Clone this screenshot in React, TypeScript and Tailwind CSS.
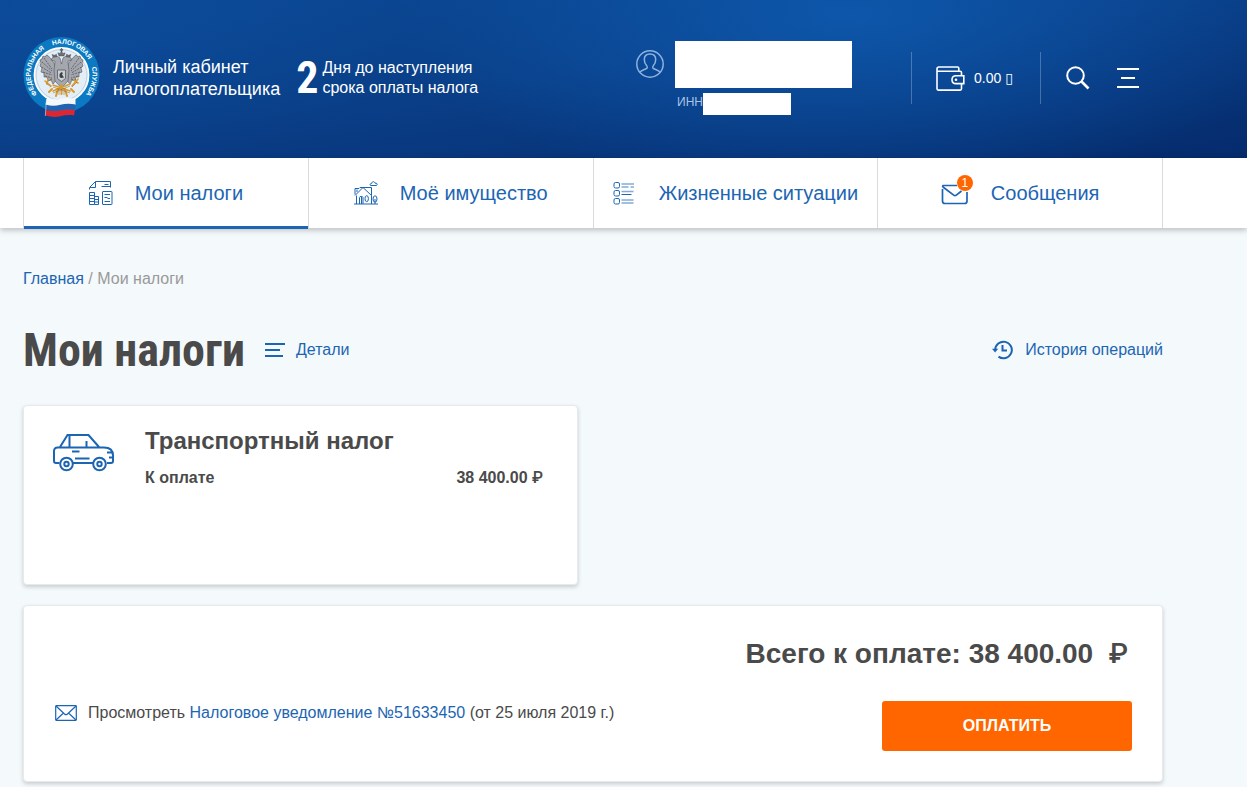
import type { ReactNode } from "react";

const navItems = [
  { title: "Мои налоги", icon: <TaxIcon />, active: true, badge: 0 },
  { title: "Моё имущество", icon: <HouseIcon />, active: false, badge: 0 },
  { title: "Жизненные ситуации", icon: <ListIcon />, active: false, badge: 0 },
  { title: "Сообщения", icon: <MessageIcon />, active: false, badge: 1 },
];

export default function App() {
  return (
    <div className="min-h-screen bg-[#f4f9fc] pb-1 font-['Liberation_Sans',Arial,sans-serif] text-base text-[#4a4a4a]">
      <Header />

      {/* navigation */}
      <nav className="bg-white pl-[23px] pr-[84px] shadow-[0_2px_6px_rgba(0,0,0,0.25)]">
        <div className="grid grid-cols-4 border-r border-[#d8dadc]">
          {navItems.map((item) => (
            <NavItem key={item.title} title={item.title} active={item.active} badge={item.badge}>
              {item.icon}
            </NavItem>
          ))}
        </div>
      </nav>

      <main className="pl-[23px] pr-[84px]">
        {/* breadcrumbs */}
        <div className="pt-[39px] leading-6 text-[#999]">
          <a href="#" className="text-[#1c65b3]">
            Главная
          </a>{" "}
          / Мои налоги
        </div>

        {/* title */}
        <div className="mt-[27px] flex h-16 items-center">
          <h1 className="font-['Roboto_Condensed',Roboto,sans-serif] text-[46px] leading-[64px] font-bold">
            Мои налоги
          </h1>
          <button type="button" className="ml-5 flex items-center gap-[11px] text-[#1c65b3]">
            <svg width="20" height="14" viewBox="0 0 20 14" fill="none" stroke="currentColor" strokeWidth="2">
              <path d="M0 1h20M0 7h15M0 13h18" />
            </svg>
            Детали
          </button>
          <a href="#" className="ml-auto flex items-center gap-3 text-[#1c65b3]">
            <HistoryIcon />
            История операций
          </a>
        </div>

        {/* taxes */}
        <div className="mt-[23px] grid grid-cols-2 gap-[30px]">
          <section className="flex h-[180px] gap-[30px] rounded-sm border border-[#e6eaed] bg-white pt-[21px] pr-[34px] pl-[29px] shadow-[0_2px_4px_rgba(0,0,0,0.18)]">
            <CarIcon />
            <div className="flex-1">
              <h2 className="text-2xl leading-7 font-bold">Транспортный налог</h2>
              <div className="mt-[11px] flex justify-between leading-6 font-bold">
                <span>К оплате</span>
                <span>
                  38 400.00 <Rouble />
                </span>
              </div>
            </div>
          </section>
        </div>

        {/* total */}
        <section className="mt-5 rounded-sm border border-[#e6eaed] bg-white px-[30px] pt-[30px] pb-[30px] shadow-[0_2px_4px_rgba(0,0,0,0.18)]">
          <div className="pr-1 text-right text-[28px] leading-9 font-bold">
            Всего к оплате: 38 400.00&nbsp; <Rouble />
          </div>
          <div className="mt-[29px] flex items-start justify-between">
            <div className="flex items-center gap-[11px] leading-6">
              <EnvelopeIcon />
              <p>
                Просмотреть{" "}
                <a href="#" className="text-[#1c65b3]">
                  Налоговое уведомление №51633450
                </a>{" "}
                (от 25 июля 2019 г.)
              </p>
            </div>
            <button type="button" className="h-[50px] w-[250px] rounded-[3px] bg-[#ff6600] font-bold text-white">
              ОПЛАТИТЬ
            </button>
          </div>
        </section>
      </main>
    </div>
  );
}

function Rouble() {
  return <span className="font-['Roboto',sans-serif] leading-none font-medium">₽</span>;
}

function Header() {
  return (
    <header className="flex h-[158px] items-center justify-between bg-[radial-gradient(ellipse_460px_180px_at_850px_15px,rgba(14,92,178,0.8),transparent),radial-gradient(ellipse_420px_150px_at_60px_0px,rgba(14,82,165,0.5),transparent),linear-gradient(172deg,#0a4590_10%,#0a3f88_45%,#052b6c_100%)] pr-[108px] pb-0.5 pl-[23px] text-white">
      <div className="flex items-center">
        <Emblem />
        <div className="ml-3 text-lg leading-[22px]">
          Личный кабинет
          <br />
          налогоплательщика
        </div>
        <span className="ml-4 font-['Roboto_Condensed',Roboto,sans-serif] text-[44px] leading-[44px] font-bold">
          2
        </span>
        <div className="ml-1 leading-5">
          Дня до наступления
          <br />
          срока оплаты налога
        </div>
      </div>

      <div className="flex items-center">
        {/* taxpayer */}
        <div className="flex gap-[11px]">
          <UserIcon />
          <div>
            <div className="h-[47px] w-[177px] bg-white" />
            <div className="mt-[5px] flex h-[22px] pl-0.5">
              <span className="w-[26px] text-xs leading-[18px] text-[#a9c3e6]">ИНН</span>
              <div className="w-[88px] bg-white" />
            </div>
          </div>
        </div>

        <a
          href="#"
          className="ml-[59px] flex h-[52px] w-[130px] items-center gap-[9px] border-x border-white/25 pl-6 text-sm"
        >
          <WalletIcon />
          <span>
            0.00 <span className="font-['DejaVu_Sans',sans-serif]">▯</span>
          </span>
        </a>
        <button type="button" aria-label="Поиск" className="ml-[25px]">
          <svg width="24" height="24" viewBox="0 0 24 24" fill="none" stroke="currentColor" strokeWidth="2">
            <circle cx="9.5" cy="9.5" r="8.3" />
            <path d="M15.5 15.5l7 7" strokeWidth="2.6" />
          </svg>
        </button>
        <button type="button" aria-label="Меню" className="ml-[27px]">
          <svg width="22" height="20" viewBox="0 0 22 20" fill="none" stroke="currentColor" strokeWidth="2">
            <path d="M0 1h22M4 10h14M0 19h22" />
          </svg>
        </button>
      </div>
    </header>
  );
}

interface NavItemProps {
  title: string;
  active: boolean;
  badge: number;
  children: ReactNode;
}

function NavItem({ title, active, badge, children }: NavItemProps) {
  return (
    <a
      href="#"
      className="relative flex h-[70px] items-center justify-center gap-[22px] border-l border-[#d8dadc] text-xl text-[#1c65b3]"
    >
      <span className="relative">
        {children}
        {badge > 0 && (
          <span className="absolute -top-1.5 -right-1 flex size-4 items-center justify-center rounded-full bg-[#ff6600] text-xs leading-4 text-white">
            {badge}
          </span>
        )}
      </span>
      {title}
      {active && <span className="absolute inset-x-0 -bottom-px h-[3px] bg-[#1c65b3]" />}
    </a>
  );
}

function Emblem() {
  return (
    <svg width="78" height="82" viewBox="0 0 78 82" className="shrink-0">
      <defs>
        <path id="ring" d="M14.8 57.9A31 31 0 1 1 62.2 57.9" />
      </defs>
      <circle cx="38.5" cy="38" r="38" fill="#0b7ac2" />
      <circle cx="38.5" cy="38" r="27.2" fill="#e4eef7" stroke="#fff" strokeWidth="1.4" />
      <circle cx="38.5" cy="38" r="25.4" fill="none" stroke="#9fb6cb" strokeWidth="0.5" />
      <text fill="#fff" fontSize="6.6" fontWeight="700">
        <textPath href="#ring" startOffset="1">
          ФЕДЕРАЛЬНАЯ
        </textPath>
        <textPath href="#ring" startOffset="61">
          НАЛОГОВАЯ
        </textPath>
        <textPath href="#ring" startOffset="111">
          СЛУЖБА
        </textPath>
      </text>
      {/* wings */}
      <g fill="#a4a8ae" stroke="#4f5359" strokeWidth="0.6">
        <path d="M33 30c-2-5-5-9-9-12l-2 2-2-1-1 3-2 1 1 3-1 3 2 2-1 4 3 1 0 4 3 0 1 4 3-1 2 4 4-5z" />
        <path d="M44 30c2-5 5-9 9-12l2 2 2-1 1 3 2 1-1 3 1 3-2 2 1 4-3 1 0 4-3 0-1 4-3-1-2 4-4-5z" />
        <path d="M32 24l-4-1 2-3 4-1 3 2 1.500 6 1.500-6 3-2 4 1 2 3-4 1 1 10-1 10-6.500 7-6.500-7-1-10z" />
      </g>
      <g fill="none" stroke="#5b5f65" strokeWidth="0.9">
        <path
          d="M21 21l8 11M19 25l10 9M18.500 30l10 6M20 35l9 3M22 39l7 2M24 43l6-1M56 21l-8 11M58 25l-10 9M58.500 30l-10 6M57 35l-9 3M55 39l-7 2M53 43l-6-1"
          strokeDasharray="2 1"
        />
      </g>
      {/* crowns */}
      <g fill="#6d7176" stroke="#3d4045" strokeWidth="0.4">
        <path d="M36 19l-1.200-3.200 2.200 0.600 1.500-2.200 1.500 2.200 2.200-0.600L41 19z" />
        <path d="M38 11.500h1v1h1v0.800h-1v1.500h-1v-1.500h-1v-0.800h1zM30 20l-1-2.500 2.500 0.700 2-1 0 2.800zM47 20l1-2.500-2.500 0.700-2-1 0 2.800z" />
      </g>
      {/* shield, sceptre and tail */}
      <path d="M34.500 33h8v8.500l-4 3-4-3z" fill="#ccd0d4" stroke="#55585d" strokeWidth="0.8" />
      <path d="M36.500 37l2-2 1.500 1-1 1.500 2 3-3 0.500-1.500-1z" fill="#3c3f44" />
      <g fill="none" stroke="#d99a2e" strokeWidth="1.600" strokeLinecap="round">
        <path d="M22 44l6 5M25 42l-1 5M30 48l17 6M47 47l-17 7M55 42l-6 7M51 43l4 3" />
        <path d="M38.500 48v9M35 52l-2 7M42 52l2 7M29 52l-3 3M48 52l3 3" strokeWidth="2" />
      </g>
      <g fill="none" stroke="#8a5f1e" strokeWidth="0.5">
        <path d="M30 50l17 6M47 49l-17 7M36 52v6M41 52v6M23 46l5 4M54 45l-5 5" />
      </g>
      {/* flag */}
      <path d="M23.500 62c5-1.500 9 1.500 14 0s9-1 15 0v6c-6-1-10-1-15 0.500s-10 1-15-0.500z" fill="#f5f8fb" />
      <path
        d="M22.500 67.500c5 1.500 10 1.500 15 0.300s9-1.500 15-0.300l-0.500 5.500c-5-1-9.500-1-14.500 0.500s-10 0.700-15-0.500z"
        fill="#2163b0"
      />
      <path
        d="M22.500 73c5 1.200 10 1.500 15 0.500s9.500-1.500 14.500-0.500l-1 5.500c-4-0.700-9-0.500-13.500 0.700s-10 0.800-15-0.700z"
        fill="#dc2634"
      />
      <path d="M22.300 79l1.200-17" stroke="#d7e4ef" strokeWidth="0.6" />
    </svg>
  );
}

function UserIcon() {
  return (
    <svg
      width="28"
      height="28"
      viewBox="0 0 28 28"
      className="mt-[9px] text-[#8db2de]"
      fill="none"
      stroke="currentColor"
      strokeWidth="1.500"
    >
      <circle cx="14" cy="14" r="13.200" />
      <path d="M3.800 22.300c1.700-2.100 4.500-2.600 6.700-3.800 1-0.600 0.900-1.900 0.100-2.900-1.500-1.700-2.300-3.900-2.300-6.100C8.300 6 10.500 3.900 14 3.900s5.700 2.100 5.700 5.600c0 2.200-0.800 4.400-2.300 6.100-0.800 1-0.900 2.300 0.100 2.900 2.200 1.200 5 1.700 6.700 3.800" />
    </svg>
  );
}

function WalletIcon() {
  return (
    <svg width="29" height="25" viewBox="0 0 29 25" fill="none" stroke="currentColor" strokeWidth="1.600">
      <path d="M25.500 9V6.500c0-0.800-0.500-1.300-1.300-1.300H1.200M25.500 18v4.800c0 0.800-0.500 1.300-1.300 1.300H2.300c-0.800 0-1.300-0.500-1.300-1.300V3c0-1.300 0.700-2 2-2h18.500c0.800 0 1.300 0.500 1.300 1.300V5" />
      <path d="M27.800 9.800H20c-2.500 0-4 1.600-4 3.900s1.500 3.900 4 3.900h7.800z" />
      <circle cx="20" cy="13.700" r="1.300" fill="currentColor" stroke="none" />
    </svg>
  );
}

function TaxIcon() {
  return (
    <svg width="24" height="24" viewBox="0 0 24 24" fill="none" stroke="currentColor" strokeWidth="1">
      <path d="M0.500 8.500V6.500L6.500 0.500H21.500V6.500M12.500 5.500H21.500M6.500 0.500V6.500H1M15.500 3.500H19.500" />
      <path d="M0.500 11.500H5.500V23.500H0.500zM0.500 14.500h5M0.500 17.500h5M0.500 20.500h5M5.500 15.500H9.500V23.500H5.500M5.500 18.500h4M5.500 21h4" />
      <rect x="13.500" y="10.500" width="9.500" height="13" rx="0.500" />
      <path d="M15.500 13.500h5.500M15.500 16.500h3M18.500 17.500h2.500M15.500 20.500h5.500" />
    </svg>
  );
}

function HouseIcon() {
  return (
    <svg width="24" height="24" viewBox="0 0 24 24" fill="none" stroke="currentColor" strokeWidth="1">
      <path d="M0 23h24M2.500 23V14.500M17.500 23V14.500M1 13.500V7.500H5L6 6.500H17.500V14.500M1 14.500L9 6.500l8.500 8M3 11V8.500" />
      <path d="M5.500 23v-6.500c0-1.500 3.500-1.500 3.500 0V23M7.500 15.500V23" />
      <ellipse cx="12.700" cy="17.700" rx="1.700" ry="3" />
      <ellipse cx="21" cy="18" rx="2" ry="3.200" />
      <path d="M21 18v5" />
      <path d="M16.500 4.500h6c1.500-1.500 0-2.700-1.500-2.300-0.500-2-3-2-3.200 0.100-1.500 0-2.300 1.200-1.300 2.200z" />
    </svg>
  );
}

function ListIcon() {
  return (
    <svg width="24" height="24" viewBox="0 0 24 24" fill="none" stroke="currentColor" strokeWidth="1">
      <rect x="1" y="1.500" width="5.500" height="5.500" rx="1.500" />
      <rect x="1" y="9.500" width="5.500" height="5.500" rx="1.500" />
      <rect x="1" y="17.500" width="5.500" height="5.500" rx="1.500" />
      <path d="M8.500 13.500h10" />
      <path
        d="M8.500 3h12.500M8.500 6h7M17.500 6h3.500M8.500 10.500h12M8.500 19h12M8.500 22h12"
        strokeWidth="1.500"
        opacity="0.550"
      />
    </svg>
  );
}

function MessageIcon() {
  return (
    <svg width="28" height="24" viewBox="0 0 28 24" fill="none" stroke="currentColor" strokeWidth="1.700">
      <path d="M1.500 8v12c0 1.700 0.800 2.500 2.500 2.500h19.500c1.700 0 2.500-0.800 2.500-2.500V11M16 4.500H2c-0.500 0.500-0.500 1 0 1.500l10.700 8.200c0.900 0.700 1.700 0.700 2.600 0L20.500 10" />
    </svg>
  );
}

function HistoryIcon() {
  return (
    <svg width="21" height="20" viewBox="0 0 21 20" fill="none" stroke="currentColor" strokeWidth="2">
      <path d="M3.200 10A8.300 8.300 0 1 1 6.500 16.600M10.500 5v5.500h4.500" />
      <path d="M0 8.800h6.200L3.100 12.500z" fill="currentColor" stroke="none" />
    </svg>
  );
}

function CarIcon() {
  return (
    <svg
      width="62"
      height="38"
      viewBox="0 0 62 38"
      className="mt-[7px] shrink-0 text-[#1c65b3]"
      fill="none"
      stroke="currentColor"
      strokeWidth="2"
    >
      <path d="M6.500 29H3c-1.200 0-2-0.800-2-2V17c0-2.200 1.300-3.500 3.500-3.500H51c6 0 9 3 9 8V27c0 1.200-0.500 2-2 2h-4M20 29h20M7 13l7.500-12H35.500L46 13M16.500 1.500V13M33.500 7v6M19 17.500h7.500M22 24.500h14.500M60 18.500h-6M60 23.500h-4" />
      <circle cx="13.500" cy="30" r="6.300" />
      <circle cx="13.500" cy="30" r="2.200" />
      <circle cx="46.500" cy="30" r="6.300" />
      <circle cx="46.500" cy="30" r="2.200" />
    </svg>
  );
}

function EnvelopeIcon() {
  return (
    <svg
      width="22"
      height="16"
      viewBox="0 0 22 16"
      className="ml-px shrink-0 text-[#1c65b3]"
      fill="none"
      stroke="currentColor"
      strokeWidth="1.200"
    >
      <rect x="0.700" y="0.700" width="20.600" height="14.600" rx="0.500" />
      <path d="M1 1l8.500 8c1 0.900 2 0.900 3 0L21 1M1 15l7.500-7M21 15l-7.500-7" />
    </svg>
  );
}
